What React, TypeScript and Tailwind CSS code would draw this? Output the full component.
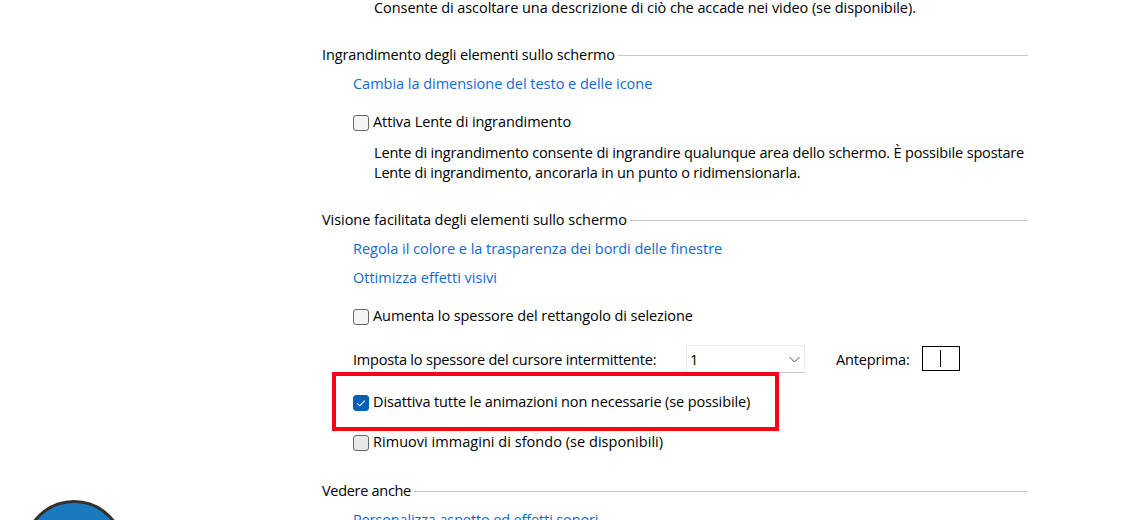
import type { ReactNode } from 'react';
import { clsx } from 'clsx';

type SectionProps = {
  title: string;
  className?: string;
  titleClassName?: string;
  children: ReactNode;
};

function Section({ title, className, titleClassName, children }: SectionProps) {
  return (
    <section className={className}>
      <div className="flex items-center h-5">
        <h2 className={clsx('shrink-0', titleClassName)}>{title}</h2>
        <div className="grow h-px bg-[#c9c9c9] ml-[3px] mt-px" />
      </div>
      <div className="pl-[31px]">{children}</div>
    </section>
  );
}

type OptionProps = {
  label: string;
  checked?: boolean;
  hovered?: boolean;
  className?: string;
};

function Option({ label, checked = false, hovered = false, className }: OptionProps) {
  return (
    <label className={clsx('flex h-5', className)}>
      <span
        className={clsx(
          'mt-[3px] mr-1 size-4 shrink-0 rounded-[3px] border',
          checked ? 'border-[#005fb8] bg-[#005fb8]' : 'border-[#666666]',
          !checked && (hovered ? 'bg-[#e8e8e8]' : 'bg-[#f4f4f4]')
        )}
      >
        {checked && (
          <svg viewBox="0 0 14 14" className="size-3.5" fill="none" stroke="white" strokeWidth="1.1">
            <path d="M3.2 7.3 L5.7 9.8 L10.8 4.7" />
          </svg>
        )}
      </span>
      <span>{label}</span>
    </label>
  );
}

function Link({ label, className }: { label: string; className?: string }) {
  return (
    <a className={clsx('block h-5 text-[#0f6bd0]', className)}>{label}</a>
  );
}

export default function App() {
  return (
    <div className="relative h-[520px] w-[1135px] overflow-hidden bg-white text-black text-[14.5px] leading-5 whitespace-nowrap font-['Open_Sans',sans-serif]">
      <main className="ml-[322px] w-[706px]">
        <p className="-mt-0.5 h-5 pl-[52px] tracking-[-0.066px]">
          Consente di ascoltare una descrizione di ciò che accade nei video (se disponibile).
        </p>

        <Section
          title="Ingrandimento degli elementi sullo schermo"
          className="mt-[27px]"
          titleClassName="tracking-[-0.12px]"
        >
          <Link label="Cambia la dimensione del testo e delle icone" className="mt-[9px] tracking-[-0.025px]" />
          <Option label="Attiva Lente di ingrandimento" className="mt-[18px] tracking-[-0.08px]" />
          <p className="mt-[11px] pl-[21px]">
            <span className="tracking-[-0.16px]">
              Lente di ingrandimento consente di ingrandire qualunque area dello schermo. È possibile spostare
            </span>
            <br />
            <span className="tracking-[-0.19px]">Lente di ingrandimento, ancorarla in un punto o ridimensionarla.</span>
          </p>
        </Section>

        <Section
          title="Visione facilitata degli elementi sullo schermo"
          className="mt-[27px]"
          titleClassName="tracking-[-0.045px]"
        >
          <Link
            label="Regola il colore e la trasparenza dei bordi delle finestre"
            className="mt-[9px] tracking-[-0.02px]"
          />
          <Link label="Ottimizza effetti visivi" className="mt-[9px]" />
          <Option
            label="Aumenta lo spessore del rettangolo di selezione"
            className="mt-[18px] tracking-[-0.085px]"
          />

          <div className="mt-[19px] flex h-7">
            <span className="mt-[5px] w-[333px] tracking-[-0.2px]">Imposta lo spessore del cursore intermittente:</span>
            <div className="flex h-7 w-[119px] justify-between border border-[#ececec] border-b-[#c8c8c8] pl-[3px] pr-1">
              <span className="mt-1">1</span>
              <svg viewBox="0 0 12 12" className="mt-[7px] size-3" fill="none" stroke="#505050" strokeWidth="1">
                <path d="M1.5 4 L6.5 9 L11.5 4" />
              </svg>
            </div>
            <span className="ml-[31px] mt-[5px] w-[86px] tracking-[-0.15px]">Anteprima:</span>
            <div className="mt-px flex h-[25px] w-[38px] border border-black pl-[17px]">
              <div className="mt-[3px] h-[17px] w-px bg-black" />
            </div>
          </div>

          <div className="relative -ml-[21px] -mt-px h-[59px] w-[447px] border-4 border-[#fe0013] pl-[17px] pt-4">
            <Option
              label="Disattiva tutte le animazioni non necessarie (se possibile)"
              checked
              className="tracking-[-0.12px]"
            />
          </div>
          <Option
            label="Rimuovi immagini di sfondo (se disponibili)"
            hovered
            className="mt-px tracking-[0.035px]"
          />
        </Section>

        <Section title="Vedere anche" className="mt-[29px]" titleClassName="tracking-[-0.3px]">
          <Link label="Personalizza aspetto ed effetti sonori" className="mt-[9px] tracking-[-0.13px]" />
        </Section>
      </main>

      <div className="absolute left-[23px] top-[500px] size-[102px] rounded-full border-[3px] border-[#352f2c] bg-[#1b79c0]" />
    </div>
  );
}
